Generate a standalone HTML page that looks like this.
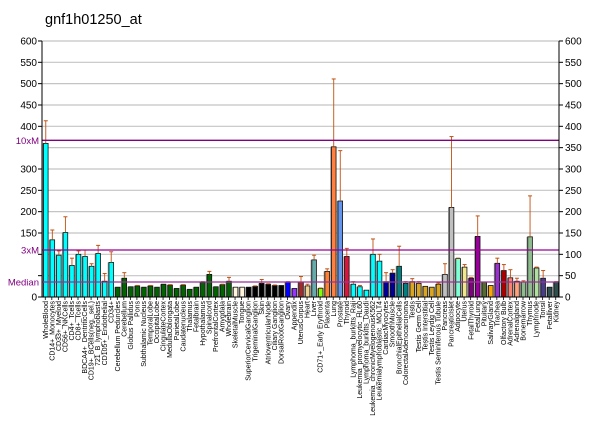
<!DOCTYPE html>
<html><head><meta charset="utf-8"><style>
html,body{margin:0;padding:0;background:#fff;width:600px;height:434px;overflow:hidden}
svg{display:block;font-family:"Liberation Sans",Arial,sans-serif}
</style></head><body>
<svg id="s" width="600" height="434" viewBox="0 0 600 434" xmlns="http://www.w3.org/2000/svg">
<rect width="600" height="434" fill="#fff"/>
<text x="45" y="24" font-size="14.5" fill="#000">gnf1h01250_at</text>
<g id="grid"></g>
<g id="bars"></g>
<line x1="42" y1="140.3" x2="559" y2="140.3" stroke="#800080" stroke-width="1.3"/>
<line x1="42" y1="250" x2="559" y2="250" stroke="#990099" stroke-width="1.3"/>
<line x1="42" y1="282" x2="559" y2="282" stroke="#993399" stroke-width="1.2"/>
<line x1="42" y1="41" x2="42" y2="297" stroke="#000"/>
<line x1="559" y1="41" x2="559" y2="297" stroke="#000"/>
<line x1="42" y1="297" x2="559" y2="297" stroke="#000"/>
<g id="axes" font-size="10" fill="#000"></g>
<g font-size="9.5" fill="#800080" text-anchor="end">
<text x="39" y="144">10xM</text>
<text x="39" y="253.5">3xM</text>
<text x="39" y="285.5">Median</text>
</g>
<g id="labels" font-size="7" fill="#000" text-anchor="end" transform="translate(0,301) rotate(-90)">
<text>WholeBlood</text><text>CD14+_Monocytes</text><text>CD33+_Myeloid</text><text>CD56+_NKCells</text><text>CD4+_Tcells</text><text>CD8+_Tcells</text><text>BDCA4+_DentriticCells</text><text>CD19+_BCells(neg._sel.)</text><text>721_B_lymphoblasts</text><text>CD105+_Endothelial</text><text>CD34+</text><text>Cerebellum Peduncles</text><text>Cerebellum</text><text>Globus Pallidus</text><text>Pons</text><text>Subthalamic Nucleus</text><text>TemporalLobe</text><text>OccipitalLobe</text><text>CingulateCortex</text><text>MedullaOblongata</text><text>ParietalLobe</text><text>Caudatenucleus</text><text>Thalamus</text><text>Fetalbrain</text><text>Hypothalamus</text><text>Spinalcord</text><text>PrefrontalCortex</text><text>Amygdala</text><text>Wholebrain</text><text>SkeletalMuscle</text><text>Tongue</text><text>SuperiorCervicalGanglion</text><text>TrigeminalGanglion</text><text>Skin</text><text>AtrioventricularNode</text><text>Ciliary Ganglion</text><text>DorsalRootGanglion</text><text>Ovary</text><text>Appendix</text><text>UterusCorpus</text><text>Heart</text><text>Liver</text><text>CD71+_Early Erythroid</text><text>Placenta</text><text>Lung</text><text>Prostate</text><text>Thyroid</text><text>Lymphoma_burkitts_Raji</text><text>Leukemia_promyelocytic_HL60</text><text>Lymphoma_burkitts_Daudi</text><text>Leukemia_chronicMyelogenousK562</text><text>Leukemialymphoblastic_MOLT4</text><text>CardiacMyocytes</text><text>SmoothMuscle</text><text>BronchialEpithelialCells</text><text>ColorectalAdenocarcinoma</text><text>Testis</text><text>Testis Germ Cell</text><text>Testis Interstitial</text><text>Testis Leydig Cell</text><text>Testis Seminiferous Tubule</text><text>Pancreas</text><text>PancreaticIslet</text><text>Adipocyte</text><text>Uterus</text><text>FetalThyroid</text><text>FetalLung</text><text>Pituitary</text><text>SalivaryGland</text><text>Trachea</text><text>Olfactory Bulb</text><text>AdrenalCortex</text><text>Adrenalgland</text><text>Bonemarrow</text><text>Thymus</text><text>Lymphnode</text><text>Tonsil</text><text>Fetalliver</text><text>Kidney</text>
</g>
</svg>
<script>
(function(){
var NS="http://www.w3.org/2000/svg";
function el(p,t,a){var e=document.createElementNS(NS,t);for(var k in a)e.setAttribute(k,a[k]);p.appendChild(e);return e;}
var g=document.getElementById('grid'),b=document.getElementById('bars'),ax=document.getElementById('axes');
var Y=function(v){return 297-v*0.4267;};
for(var v=50;v<=600;v+=50){el(g,'line',{x1:42,x2:559,y1:Y(v),y2:Y(v),stroke:'#c4c4c4','stroke-width':1.2});}
for(var v=0;v<=600;v+=50){var y=Y(v);
 el(ax,'line',{x1:559,x2:563,y1:y,y2:y,stroke:'#000'});
 var t=el(ax,'text',{x:565,y:y+3.5});t.textContent=v;
 if(v>=150&&v!=350||v==0){el(ax,'line',{x1:38,x2:42,y1:y,y2:y,stroke:'#000'});var t2=el(ax,'text',{x:37,y:y+3.5,'text-anchor':'end'});t2.textContent=v;}
}
el(ax,'line',{x1:38,x2:42,y1:Y(100),y2:Y(100),stroke:'#000'});
el(ax,'line',{x1:38,x2:42,y1:Y(50),y2:Y(50),stroke:'#000'});
var d=[[360,413,'#00ffff'],[134,157,'#00ffff'],[98,108,'#00ffff'],[151,188,'#00ffff'],[74,91,'#00ffff'],[100,108,'#00ffff'],[95,110,'#00ffff'],[72,78,'#00ffff'],[102,121,'#00ffff'],[37,55,'#00ffff'],[81,106,'#00ffff'],
[23,0,'#006400'],[44,57,'#006400'],[24,0,'#006400'],[26,27,'#006400'],[23,0,'#006400'],[26,27,'#006400'],[23,0,'#006400'],[30,0,'#006400'],[28,29,'#006400'],[20,0,'#006400'],[28,29,'#006400'],[18,0,'#006400'],[23,0,'#006400'],[34,36,'#006400'],[53,60,'#006400'],[24,0,'#006400'],[29,30,'#006400'],[37,46,'#006400'],
[23,0,'#fff5dc'],[23,0,'#fff5dc'],[23,0,'#000'],[25,26,'#000'],[32,41,'#000'],[30,31,'#000'],[27,28,'#000'],[27,0,'#000'],[35,36,'#0000ff'],[20,0,'#9933ff'],[35,48,'#a52a2a'],[26,30,'#f0d090'],[87,98,'#66aaaa'],[20,21,'#80ff00'],[60,66,'#ff8030'],[352,511,'#ff8040'],[225,343,'#6495ed'],[95,114,'#dc143c'],
[30,36,'#00ffff'],[24,27,'#00ffff'],[16,0,'#00ffff'],[100,136,'#00ffff'],[84,100,'#00ffff'],[36,57,'#000099'],[56,64,'#000099'],[72,119,'#008080'],[32,36,'#008080'],[36,43,'#daa520'],[32,36,'#daa520'],[25,0,'#daa520'],[23,0,'#daa520'],[30,33,'#daa520'],
[53,78,'#c0c0c0'],[210,376,'#c0c0c0'],[90,91,'#7fffd4'],[70,76,'#f0e68c'],[44,46,'#800080'],[142,190,'#990099'],[35,0,'#556b2f'],[27,0,'#ffa500'],[79,91,'#9932cc'],[62,76,'#aa0000'],[45,64,'#fa8072'],[37,44,'#ffa07a'],[35,38,'#8fbc8f'],[141,237,'#8fbc8f'],[68,70,'#b0e0a0'],[44,62,'#483d8b'],[23,0,'#2f4f4f'],[35,36,'#2f4f4f']];
var P=517/79;
d.forEach(function(r,i){var x=42+P*i;var cx=x+P/2;
 el(b,'rect',{x:x+0.3,y:Y(r[0]),width:1.2,height:297-Y(r[0]),fill:'#999'});
 el(b,'rect',{x:x+1.5,y:Y(r[0]),width:4.6,height:297-Y(r[0]),fill:r[2],stroke:'#111','stroke-width':0.8});
 if(r[1]>r[0]){el(b,'line',{x1:cx+0.5,x2:cx+0.5,y1:Y(r[1]),y2:Y(r[0]),stroke:'#c05010','stroke-width':0.9});
  el(b,'line',{x1:cx-1.5,x2:cx+2.5,y1:Y(r[1]),y2:Y(r[1]),stroke:'#c05010','stroke-width':1});}
 el(b,'line',{x1:cx,x2:cx,y1:297,y2:300,stroke:'#000','stroke-width':0.8});
});
var ts=document.getElementById('labels').getElementsByTagName('text');
for(var i=0;i<ts.length;i++){ts[i].setAttribute('x',0);ts[i].setAttribute('y',42+P*(i+0.5)+2.6);}
})();
</script>
</body></html>
